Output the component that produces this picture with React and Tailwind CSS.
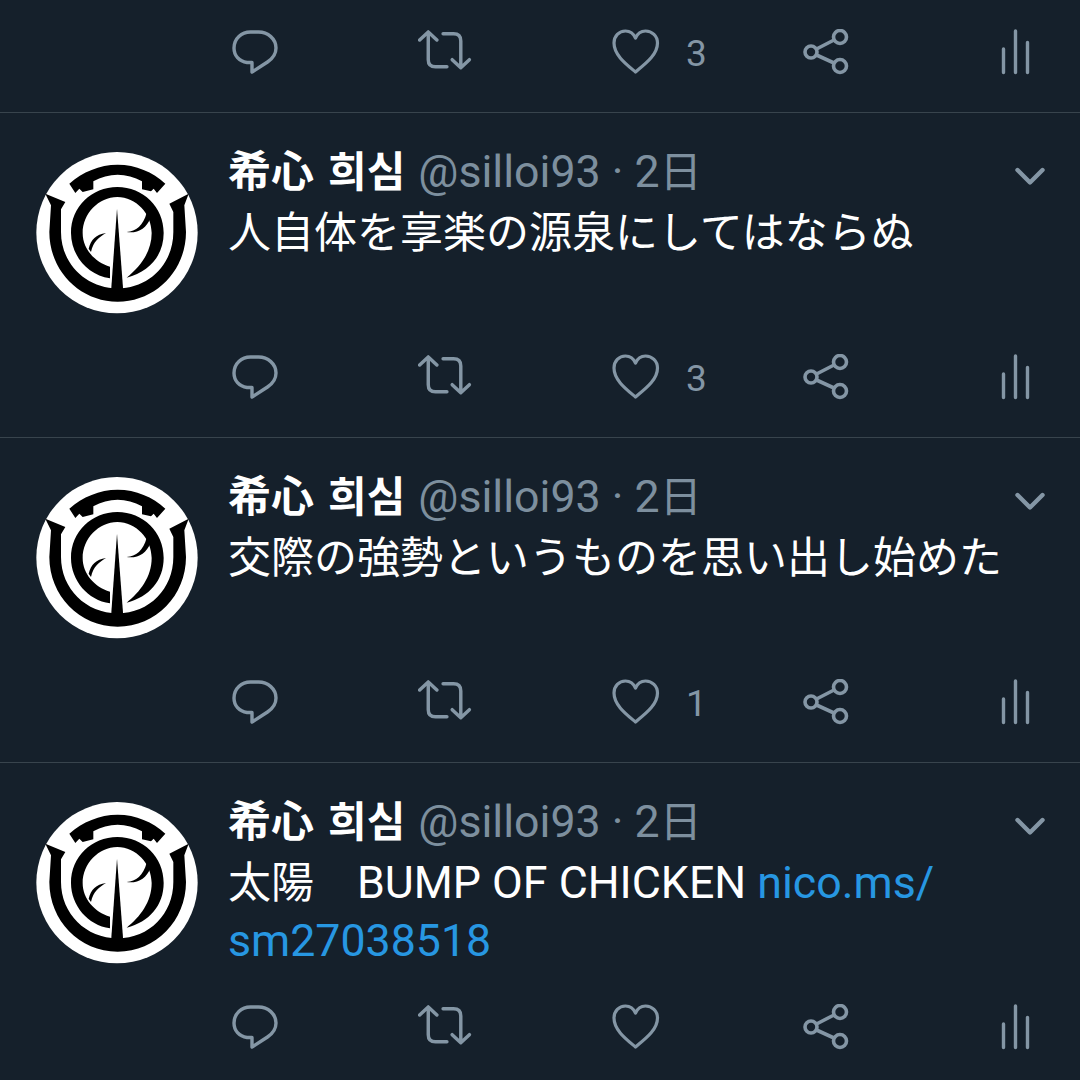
const FONT = 'font-["Roboto","Noto_Sans_CJK_JP","Noto_Sans_CJK_KR",sans-serif]';

function Logo() {
  return (
    <svg viewBox="0 0 486 486" className="w-[162px] h-[162px] shrink-0 block">
      <circle cx="243" cy="242" r="242" fill="#fff" />
      <path d="M100 95 C140 60 190 38 245 38 C300 38 350 60 388 95 L363 123 L353 110 L345 118 L318 112 L318 88 C295 75 270 68 245 68 C220 68 195 75 172 88 L172 112 L140 120 L130 110 L118 123 Z" fill="#000" />
      <path d="M28 125 L88 150 L75 172 L75 240 C75 335 150 409 245 409 C340 409 412 335 412 240 L412 180 L400 155 L458 125 L445 160 L450 240 C450 355 360 449 245 449 C130 449 40 355 40 240 L45 160 Z" fill="#000" />
      <path d="M222 379 C155 370 105 310 105 243 C105 165 167 105 244 105 C321 105 383 165 383 243 C383 310 340 360 272 377 C312 345 347 300 347 243 C347 185 300 135 244 135 C188 135 140 185 140 243 C140 290 175 330 222 344 Z" fill="#000" />
      <path d="M243 170 L225 420 L262 420 Z" fill="#000" />
      <path d="M158 290 C165 262 180 248 210 243 C190 255 172 268 165 300 Z" fill="#000" />
      <path d="M272 240 C300 238 322 220 332 182 L342 200 C332 228 305 245 272 240 Z" fill="#000" />
    </svg>
  );
}

const ic = "#8496a5";

function Comment() {
  return (
    <svg width="46" height="46" viewBox="0 0 46 46" fill="none" stroke={ic} strokeWidth="3.4" strokeLinejoin="round" strokeLinecap="round" className="block">
      <path d="M15 33.5 C7 32.5 2 26.5 2 19 C2 9.5 9.5 3 18.5 3 L26.5 3 C36 3 44 10 44 19 C44 26 40 30 35.5 33 L20 43 L20 33.5 Z" />
    </svg>
  );
}

function Retweet() {
  return (
    <svg width="54" height="44" viewBox="0 0 56 46" fill="none" stroke={ic} strokeWidth="3.6" strokeLinejoin="round" strokeLinecap="round" className="block">
      <path d="M1.5 10.5 L10.5 2 L19.5 10.5 M10.5 3 L10.5 31 C10.5 36 13 38.5 18 38.5 L30 38.5" />
      <path d="M26 4 L37 4 C42 4 44.5 6.5 44.5 11.5 L44.5 38.5 M35.5 31 L44.5 39.5 L53.5 31" />
    </svg>
  );
}

function Heart() {
  return (
    <svg width="48" height="46" viewBox="0 0 48 46" fill="none" stroke={ic} strokeWidth="3.2" strokeLinejoin="round" className="block">
      <path d="M23.5 43 C14 35 2 26 2 14 C2 7 7 2 13.5 2 C18 2 21.5 4.5 23.5 9 C25.5 4.5 29 2 33.5 2 C40 2 45.5 7 45.5 14 C45.5 26 33 35 23.5 43 Z" />
    </svg>
  );
}

function Share() {
  return (
    <svg width="46" height="46" viewBox="0 0 46 46" fill="none" stroke={ic} strokeWidth="3.6" className="block">
      <circle cx="8" cy="23" r="6" />
      <circle cx="37" cy="8" r="6.5" />
      <circle cx="37" cy="37" r="6.5" />
      <path d="M13.5 20 L31 11 M13.5 26 L31 34" />
    </svg>
  );
}

function Bars() {
  return (
    <svg width="30" height="46" viewBox="0 0 30 46" fill="none" stroke={ic} strokeWidth="3.4" strokeLinecap="round" className="block">
      <path d="M2.5 20 L2.5 43.5 M14.5 2 L14.5 43.5 M26.5 13.5 L26.5 43.5" />
    </svg>
  );
}

function Actions({ likes }) {
  return (
    <div className="flex items-center h-[60px] pl-[232px]">
      <div className="w-[186px]"><Comment /></div>
      <div className="w-[194px]"><Retweet /></div>
      <div className="w-[191px] flex items-center">
        <Heart />
        {likes && <span className={`ml-[26px] mt-[3px] text-[37px] text-[#8496a5] ${FONT}`}>{likes}</span>}
      </div>
      <div className="w-[198px]"><Share /></div>
      <Bars />
    </div>
  );
}

function Latin({ children, className = "" }) {
  return <span className={`text-[44.7px] ${className}`}>{children}</span>;
}

function Tweet({ children, likes }) {
  return (
    <div className="h-[325px] border-b border-[#38444d] flex flex-col justify-between pt-[30px] pb-[30px] box-border">
      <div className="flex">
        <div className="ml-[36px] mt-[9px] mr-[30px]"><Logo /></div>
        <div className="flex-1 pr-[35px] min-w-0">
          <div className="flex items-center justify-between h-[60px]">
            <div className={`flex items-baseline whitespace-nowrap ${FONT}`}>
              <span className="text-[43px] font-bold text-white mr-[14px]">希心</span>
              <span className="text-[42px] font-bold text-white mr-[13px]">희심</span>
              <span className="text-[44.7px] text-[#7d8f9e]">@silloi93 · 2<span className="text-[42px]">日</span></span>
            </div>
            <svg width="30" height="18" viewBox="0 0 30 18" fill="none" stroke={ic} strokeWidth="4.4" strokeLinecap="round" strokeLinejoin="round" className="mt-[6px]">
              <path d="M2.5 3 L15 15.5 L27.5 3" />
            </svg>
          </div>
          <div className={`text-[43px] leading-[58px] text-white mt-px whitespace-nowrap ${FONT}`}>{children}</div>
        </div>
      </div>
      <Actions likes={likes} />
    </div>
  );
}

export default function App() {
  return (
    <div className="w-[1080px] h-[1080px] overflow-hidden bg-[#15202b]">
      <div className="h-[113px] border-b border-[#38444d] flex flex-col justify-end pb-[30px] box-border">
        <Actions likes="3" />
      </div>
      <Tweet likes="3">人自体を享楽の源泉にしてはならぬ</Tweet>
      <Tweet likes="1">交際の強勢というものを思い出し始めた</Tweet>
      <Tweet>
        太陽　<Latin>BUMP OF CHICKEN </Latin><Latin className="text-[#2797e2]">nico.ms/</Latin>
        <br />
        <Latin className="text-[#2797e2]">sm27038518</Latin>
      </Tweet>
    </div>
  );
}
